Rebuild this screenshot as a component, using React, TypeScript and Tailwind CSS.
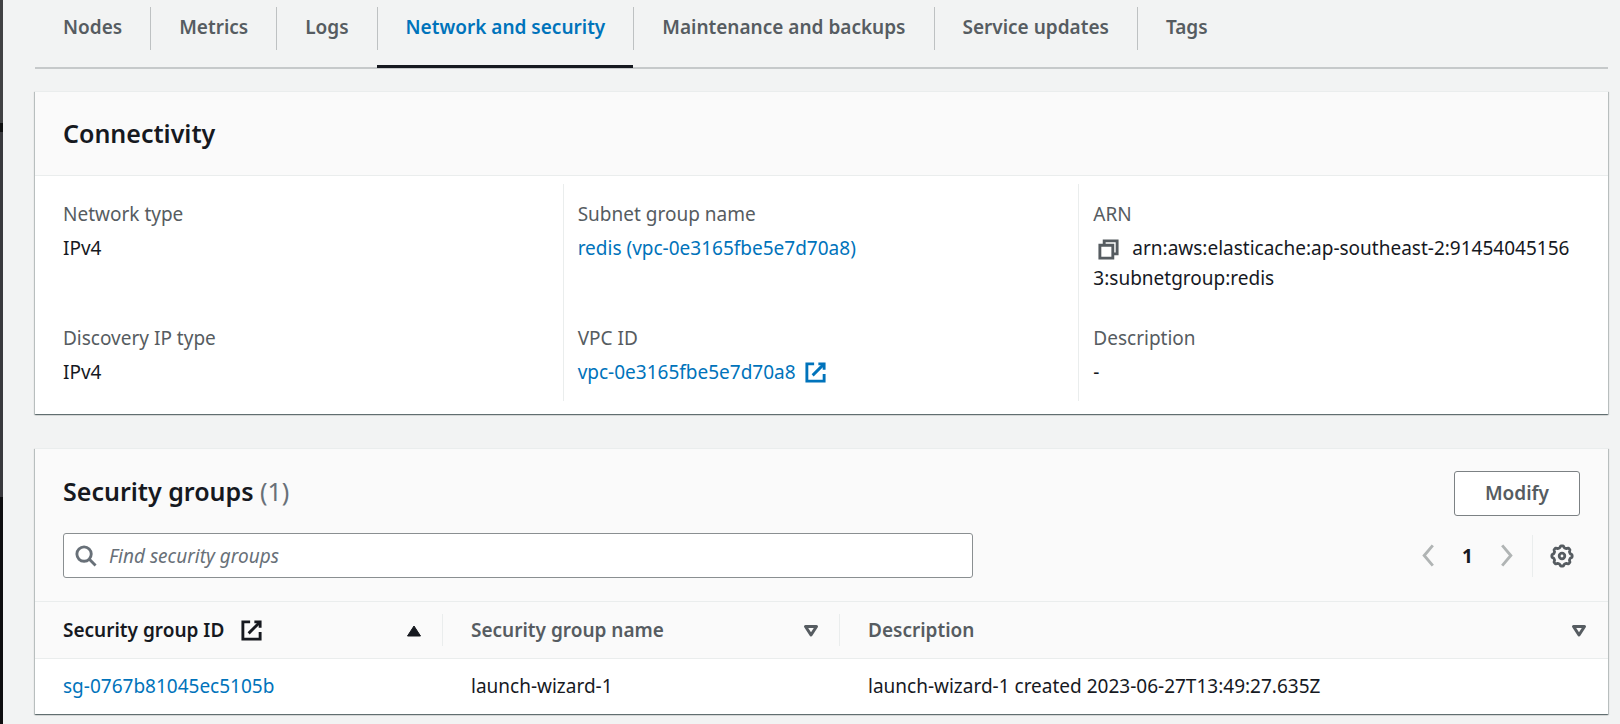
import React from "react";

const tabs = [
  "Nodes",
  "Metrics",
  "Logs",
  "Network and security",
  "Maintenance and backups",
  "Service updates",
  "Tags",
];
const activeTab = "Network and security";

const cardClass =
  "border-t border-[#eaeded] bg-white shadow-[0_1px_1px_0_rgba(0,20,24,0.4),1px_1px_1px_0_rgba(0,20,24,0.18),-1px_1px_1px_0_rgba(0,20,24,0.18)]";

function ExternalIcon({ className = "" }: { className?: string }) {
  return (
    <svg viewBox="0 0 16 16" fill="none" stroke="currentColor" strokeWidth="2" className={`size-[23px] shrink-0 ${className}`} aria-hidden="true">
      <path d="M10 2h4v4" />
      <path d="m6 10 8-8" />
      <path d="M14 9.05V14H2V2h5.04" />
    </svg>
  );
}

function CopyIcon() {
  return (
    <svg viewBox="0 0 16 16" fill="none" stroke="currentColor" strokeWidth="2" className="size-[23px]" aria-hidden="true">
      <path d="M2 5h9v9H2z" />
      <path d="M5 5V2h9v9h-3" />
    </svg>
  );
}

function SearchIcon() {
  return (
    <svg viewBox="0 0 16 16" fill="none" stroke="currentColor" strokeWidth="2" className="size-[23px] shrink-0 text-[#687078]" aria-hidden="true">
      <circle cx="7" cy="7" r="5" />
      <path d="m15 15-4.5-4.5" />
    </svg>
  );
}

function Chevron({ d }: { d: string }) {
  return (
    <svg viewBox="0 0 16 16" fill="none" stroke="currentColor" strokeWidth="2" className="size-[23px]" aria-hidden="true">
      <path d={d} />
    </svg>
  );
}

const gearPath =
  Array.from({ length: 96 }, (_, i) => {
    const a = (i / 96) * Math.PI * 2;
    const wave = Math.tanh(2 * Math.cos(8 * a));
    const r = 9.3 + 0.9 * wave;
    return `${i ? "L" : "M"}${(12 + r * Math.sin(a)).toFixed(2)} ${(12 - r * Math.cos(a)).toFixed(2)}`;
  }).join("") + "Z";

function GearIcon() {
  return (
    <svg viewBox="0 0 24 24" fill="none" stroke="currentColor" strokeWidth="2.8" strokeLinejoin="round" className="size-6" aria-hidden="true">
      <path d={gearPath} />
      <circle cx="12" cy="12" r="2.8" />
    </svg>
  );
}

function SortIcon({ active = false }: { active?: boolean }) {
  return (
    <svg viewBox="0 0 16 16" stroke="currentColor" strokeLinejoin="round" className="size-4 shrink-0" aria-hidden="true">
      {active ? (
        <path d="M8 4 1.5 14h13z" fill="currentColor" strokeWidth="1" />
      ) : (
        <path d="M8 13 2.5 4.5h11z" fill="none" strokeWidth="3" />
      )}
    </svg>
  );
}

function Field({ label, children }: { label: string; children: React.ReactNode }) {
  return (
    <div>
      <dt className="mb-1 text-[#565c61]">{label}</dt>
      <dd className="break-all">{children}</dd>
    </div>
  );
}

function HeaderCell({ active, last, className = "", children }: { active?: boolean; last?: boolean; className?: string; children: React.ReactNode }) {
  return (
    <th scope="col" aria-sort={active ? "ascending" : "none"} className={`border-y border-[#eaeded] p-0 text-left font-semibold ${className}`}>
      <div className={`my-3 flex h-8 items-center border-r pr-5 pl-7 ${last ? "border-transparent" : "border-[#eaeded]"} ${active ? "text-[#16191f]" : "text-[#565c61]"}`}>
        <button type="button" className="flex flex-1 items-center justify-between">
          <span className="flex items-center gap-4 whitespace-nowrap">{children}</span>
          <SortIcon active={active} />
        </button>
      </div>
    </th>
  );
}

const linkClass = "text-[#0073bb] hover:underline";
const columnClass = "grid grid-rows-[94px_auto] gap-[30px] pt-[15px] pb-[14px]";

export default function App() {
  return (
    <div className="flex min-h-screen bg-[#f2f3f3] font-['Noto_Sans','Open_Sans',sans-serif] text-[19px] leading-[30px] text-[#16191f]">
      <div className="w-[3px] shrink-0 bg-[linear-gradient(#414143_0_123px,#101011_123px_132px,#39393d_132px_497px,#0e0e10_497px)]" />
      <main className="min-w-0 flex-1 pr-3 pl-8">
        <nav aria-label="Cluster details" className="border-b-2 border-[#c6c9ca] pt-[7px]">
          <ul className="flex">
            {tabs.map((t, i) => (
              <li key={t} className="relative pb-[17px]">
                <button
                  type="button"
                  className={`block h-[43px] px-7 pb-1 font-semibold whitespace-nowrap ${i ? "border-l border-[#bec1c2]" : ""} ${t === activeTab ? "text-[#0073bb]" : "text-[#565c61]"}`}
                >
                  {t}
                </button>
                {t === activeTab && <span className="absolute inset-x-0 -bottom-px h-[3px] bg-[#16191f]" />}
              </li>
            ))}
          </ul>
        </nav>

        <section className={`mt-[22px] ${cardClass}`}>
          <header className="border-b border-[#eaeded] bg-[#fafafa] px-7 pt-[25px] pb-[26px]">
            <h2 className="text-[25px] leading-8 font-semibold">Connectivity</h2>
          </header>
          <div className="grid grid-cols-3 pt-2 pr-[14px] pb-[13px] pl-3">
            <dl className={`px-4 ${columnClass}`}>
              <Field label="Network type">IPv4</Field>
              <Field label="Discovery IP type">IPv4</Field>
            </dl>
            <dl className={`border-l border-[#eaeded] px-[14px] ${columnClass}`}>
              <Field label="Subnet group name">
                <a href="#subnet-group" className={linkClass}>redis (vpc-0e3165fbe5e7d70a8)</a>
              </Field>
              <Field label="VPC ID">
                <a href="#vpc" className={`inline-flex items-center gap-2 ${linkClass}`}>
                  vpc-0e3165fbe5e7d70a8
                  <ExternalIcon />
                </a>
              </Field>
            </dl>
            <dl className={`border-l border-[#eaeded] px-[14px] ${columnClass}`}>
              <Field label="ARN">
                <button type="button" aria-label="Copy ARN" className="mr-3 ml-1 inline-flex align-middle text-[#565c61]">
                  <CopyIcon />
                </button>
                arn:aws:elasticache:ap-southeast-2:914540451563:subnetgroup:redis
              </Field>
              <Field label="Description">-</Field>
            </dl>
          </div>
        </section>

        <section className={`mt-[34px] ${cardClass}`}>
          <header className="bg-[#fafafa] px-7 pt-[22px] pb-[23px]">
            <div className="flex items-start justify-between">
              <h2 className="text-[25px] leading-10 font-semibold">
                Security groups <span className="font-normal text-[#687078]">(1)</span>
              </h2>
              <button type="button" className="h-[45px] rounded-[3px] border border-[#7c8184] bg-white px-[30px] pb-0.5 font-semibold text-[#565c61]">
                Modify
              </button>
            </div>
            <div className="mt-[17px] flex items-center justify-between">
              <label className="flex h-[45px] w-3/5 items-center gap-3 rounded-[3px] border border-[#8a8f91] bg-white px-[10px]">
                <SearchIcon />
                <input
                  type="search"
                  aria-label="Find security groups"
                  placeholder="Find security groups"
                  className="min-w-0 flex-1 bg-transparent outline-none placeholder:text-[#687078] placeholder:italic"
                />
              </label>
              <div className="flex items-center">
                <button type="button" aria-label="Previous page" className="text-[#b0b4b4]">
                  <Chevron d="m11 1-6 7 6 7" />
                </button>
                <button type="button" aria-current="page" className="w-[55px] text-center font-bold">1</button>
                <button type="button" aria-label="Next page" className="text-[#b0b4b4]">
                  <Chevron d="m5 1 6 7-6 7" />
                </button>
                <span className="ml-[14px] h-[42px] border-l border-[#eaeded]" />
                <button type="button" aria-label="Preferences" className="mr-1.5 ml-[17px] text-[#565c61]">
                  <GearIcon />
                </button>
              </div>
            </div>
          </header>
          <table className="w-full table-fixed border-collapse">
            <thead className="bg-[#fafafa]">
              <tr>
                <HeaderCell active className="w-[408px]">
                  Security group ID
                  <ExternalIcon />
                </HeaderCell>
                <HeaderCell className="w-[397px]">Security group name</HeaderCell>
                <HeaderCell last>Description</HeaderCell>
              </tr>
            </thead>
            <tbody>
              <tr>
                <td className="px-7 pt-3 pb-[13px]">
                  <a href="#security-group" className={linkClass}>sg-0767b81045ec5105b</a>
                </td>
                <td className="px-7 pt-3 pb-[13px]">launch-wizard-1</td>
                <td className="px-7 pt-3 pb-[13px]">launch-wizard-1 created 2023-06-27T13:49:27.635Z</td>
              </tr>
            </tbody>
          </table>
        </section>
      </main>
    </div>
  );
}
